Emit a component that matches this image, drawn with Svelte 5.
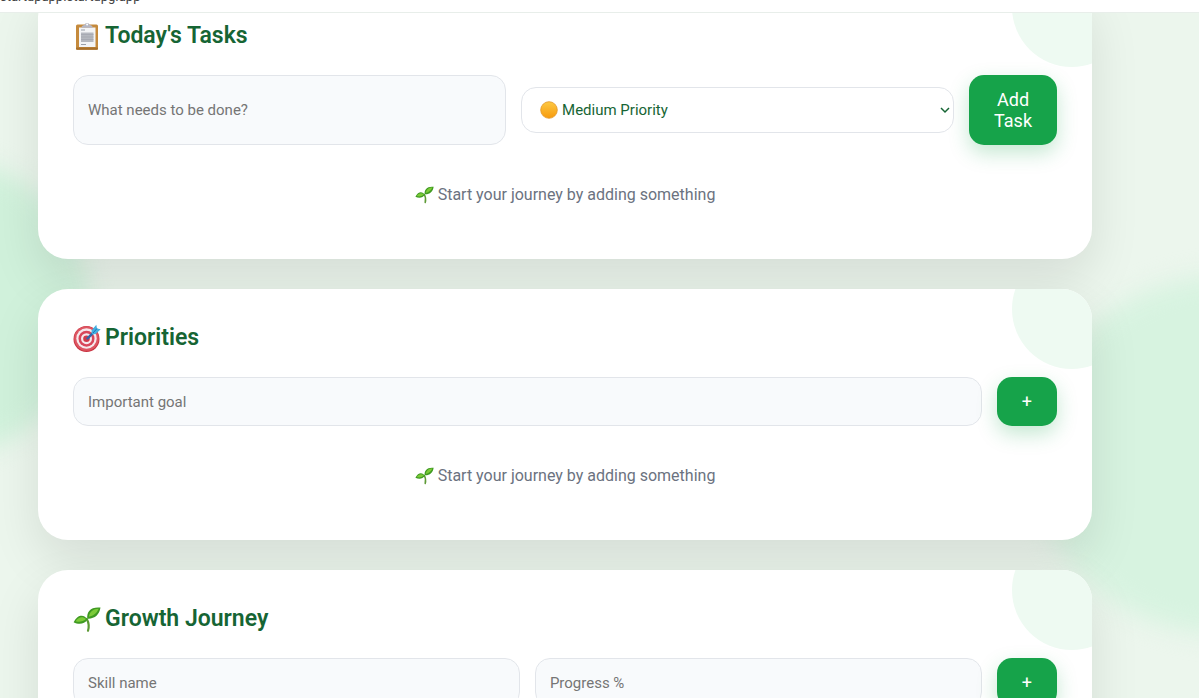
<script lang="ts">
  type Field = { id: string; label: string; type?: string };
  type Section = { id: string; title: string; icon: string; fields: Field[]; select?: boolean; action: string };

  const sections: Section[] = [
    {
      id: 'tasks',
      title: "Today's Tasks",
      icon: 'clipboard',
      fields: [{ id: 'task', label: 'What needs to be done?' }],
      select: true,
      action: 'Add Task'
    },
    {
      id: 'priorities',
      title: 'Priorities',
      icon: 'target',
      fields: [{ id: 'goal', label: 'Important goal' }],
      action: '+'
    },
    {
      id: 'growth',
      title: 'Growth Journey',
      icon: 'sprout',
      fields: [
        { id: 'skill', label: 'Skill name' },
        { id: 'progress', label: 'Progress %', type: 'number' }
      ],
      action: '+'
    }
  ];

  let priority = $state('medium');
</script>

{#snippet sprout()}
  <svg viewBox="0 0 28 28" aria-hidden="true">
    <path d="M15 25.800c1.200-4 1-7.800-1.200-11.800" fill="none" stroke="#5d9a35" stroke-width="2.200" stroke-linecap="round" />
    <path d="M14.500 14.500C11.500 9.500 5 8.500.6 17.200c4.700 2.600 10.800 2.300 13.900-2.700z" fill="#3f9a22" />
    <path d="M2.600 16.200c2.900-4.200 6.900-5.200 10.400-2.200-3 2.700-6.600 3.400-10.400 2.200z" fill="#7ccb38" />
    <path d="M14.300 13.700C13.500 6.500 18 1.500 27.500 2.600c-1.200 7.300-5.700 11.500-13.200 11.100z" fill="#3f9a22" />
    <path d="M15.800 11.800c.7-4.800 4.400-8 9.800-8-1.700 4.300-5.100 7.200-9.800 8z" fill="#7ccb38" />
  </svg>
{/snippet}

{#snippet clipboard()}
  <svg viewBox="0 0 28 28" aria-hidden="true">
    <rect x="3" y="2.500" width="22" height="25.200" rx="1.500" fill="#c58a3c" />
    <rect x="3" y="25.500" width="22" height="2.200" rx="1" fill="#a8702c" />
    <path d="M6 5.500h16.500v19.500H6z" fill="#f3f4f6" />
    <path d="M8 8h4" stroke="#9aa0aa" />
    <path d="M8 10.500h12.500v9.500H8z" fill="#b5b8bf" />
    <path d="M8 12.500h12.500M8 15h12.500M8 17.500h12.500" stroke="#a0a4ad" stroke-width=".7" />
    <path d="M8 22.500h5" stroke="#9aa0aa" />
    <path d="M8.500 5.800c0-2 1.500-2.800 3-2.800C11.700.2 16.500.2 16.700 3c1.600 0 3 .8 3 2.800z" fill="#b5b7c4" />
    <circle cx="14.100" cy="2.500" r="1" fill="#fff" />
  </svg>
{/snippet}

{#snippet target()}
  <svg viewBox="0 0 28 28" aria-hidden="true">
    <circle cx="13.500" cy="15" r="13" fill="#c93442" />
    <circle cx="13.500" cy="14.500" r="12.300" fill="#dd5662" />
    <circle cx="13.500" cy="14.500" r="10.200" fill="#f6e9ec" />
    <circle cx="13.500" cy="14.700" r="8" fill="#d8475a" />
    <circle cx="13.500" cy="14.700" r="5.500" fill="#f6e9ec" />
    <circle cx="13.500" cy="14.700" r="3.300" fill="#cf3a4a" />
    <path d="M14.500 14.300 22 7" stroke="#3567a8" stroke-width="2.500" stroke-linecap="round" />
    <path d="m18.500 6.500 4.800-5.700.7 3.700 3.700.8-5 4.700-3.700.3z" fill="#43afe0" />
    <path d="m20 9 4-4.500" stroke="#1976b8" />
  </svg>
{/snippet}

<div class="page">
  <div class="blob blob-left"></div>
  <div class="blob blob-right"></div>

  <header class="topbar">startupapp.startupg.app</header>

  <main class="content">
    {#each sections as section (section.id)}
      <section class="card" aria-labelledby={section.id}>
        <h2 id={section.id}>
          {#if section.icon === 'clipboard'}
            {@render clipboard()}
          {:else if section.icon === 'target'}
            {@render target()}
          {:else}
            {@render sprout()}
          {/if}
          <span>{section.title}</span>
        </h2>

        <form class="row" onsubmit={(e) => e.preventDefault()}>
          {#each section.fields as field (field.id)}
            <input id={field.id} type={field.type ?? 'text'} placeholder={field.label} aria-label={field.label} />
          {/each}
          {#if section.select}
            <div class="select">
              <svg class="dot" viewBox="0 0 18 18" aria-hidden="true">
                <defs>
                  <linearGradient id="amber" x1="0" y1="0" x2="0" y2="1">
                    <stop offset="0" stop-color="#fdc944" />
                    <stop offset="1" stop-color="#f79a0c" />
                  </linearGradient>
                </defs>
                <circle cx="9" cy="9" r="8.300" fill="url(#amber)" stroke="#e2982a" stroke-width=".8" />
              </svg>
              <select bind:value={priority} aria-label="Priority">
                <option value="high">High Priority</option>
                <option value="medium">Medium Priority</option>
                <option value="low">Low Priority</option>
              </select>
              <svg class="chevron" viewBox="0 0 10 10" aria-hidden="true">
                <path d="m1 3 4 4 4-4" fill="none" stroke="#166534" stroke-width="1.500" />
              </svg>
            </div>
          {/if}
          <button type="submit">{section.action}</button>
        </form>

        <p class="empty">
          {@render sprout()}
          <span>Start your journey by adding something</span>
        </p>
      </section>
    {/each}
  </main>
</div>

<style>
  :global(body) {
    background: #ecf6ed;
    font-family: Roboto, sans-serif;
    color: #166534;
  }

  .page {
    position: relative;
    height: 100vh;
    overflow: hidden;
  }

  .blob {
    position: absolute;
    border-radius: 50%;
    filter: blur(12px);
  }

  .blob-left {
    top: 157px;
    left: -215px;
    width: 305px;
    height: 300px;
    background: #d0f1db;
  }

  .blob-right {
    top: 275px;
    right: -232px;
    width: 400px;
    height: 360px;
    background: #d7f3e0;
  }

  .topbar {
    position: relative;
    z-index: 2;
    display: flex;
    align-items: flex-end;
    box-sizing: border-box;
    height: 13px;
    padding-bottom: 7px;
    overflow: hidden;
    background: #fff;
    border-bottom: 1px solid #e8eeea;
    color: #444;
    font-size: 13px;
    line-height: 16px;
  }

  /* the list is scrolled slightly under the top bar */
  .content {
    position: relative;
    display: flex;
    flex-direction: column;
    gap: 30px;
    margin-top: -26px;
    padding: 0 107px 30px 38px;
  }

  .card {
    position: relative;
    overflow: hidden;
    padding: 35px;
    border-radius: 30px;
    background: #fff;
    box-shadow: 0 20px 50px rgba(0, 0, 0, 0.1);
  }

  .card::before {
    content: '';
    position: absolute;
    top: -40px;
    right: -40px;
    width: 120px;
    height: 120px;
    border-radius: 50%;
    background: #eefaf2;
  }

  h2 {
    display: flex;
    align-items: center;
    gap: 4px;
    margin: 0 0 25px;
    font-size: 23px;
    font-weight: 600;
    line-height: 28px;
  }

  h2 svg {
    width: 28px;
    height: 28px;
  }

  .row {
    position: relative;
    display: flex;
    align-items: center;
    gap: 15px;
  }

  input,
  select {
    box-sizing: border-box;
    width: 100%;
    border: 1px solid #e2e5ea;
    border-radius: 15px;
    font: 15px/18px Roboto, sans-serif;
  }

  input,
  .select {
    flex: 1 1 100px;
    min-width: 0;
  }

  input {
    align-self: stretch;
    padding: 14px;
    background: #f8fafc;
  }

  input::placeholder {
    color: #757575;
  }

  .select {
    position: relative;
  }

  select {
    display: block;
    height: 46px;
    padding: 0 30px 0 40px;
    appearance: none;
    background: #fff;
    color: #166534;
  }

  .dot,
  .chevron {
    position: absolute;
    top: 50%;
    transform: translateY(-50%);
    pointer-events: none;
  }

  .dot {
    left: 19px;
    width: 18px;
    height: 18px;
  }

  .chevron {
    right: 4px;
    width: 10px;
    height: 10px;
  }

  button {
    flex: none;
    width: min-content;
    padding: 14px 25px;
    border: 0;
    border-radius: 15px;
    background: #16a34a;
    box-shadow: 0 8px 20px rgba(22, 163, 74, 0.25);
    color: #fff;
    font: 18px/21px Roboto, sans-serif;
    cursor: pointer;
  }

  .empty {
    display: flex;
    justify-content: center;
    align-items: center;
    gap: 4px;
    margin: 20px 0 0;
    padding: 20px 0;
    color: #6b7280;
    font-size: 16px;
    line-height: 18px;
  }

  .empty svg {
    width: 19px;
    height: 19px;
  }
</style>
